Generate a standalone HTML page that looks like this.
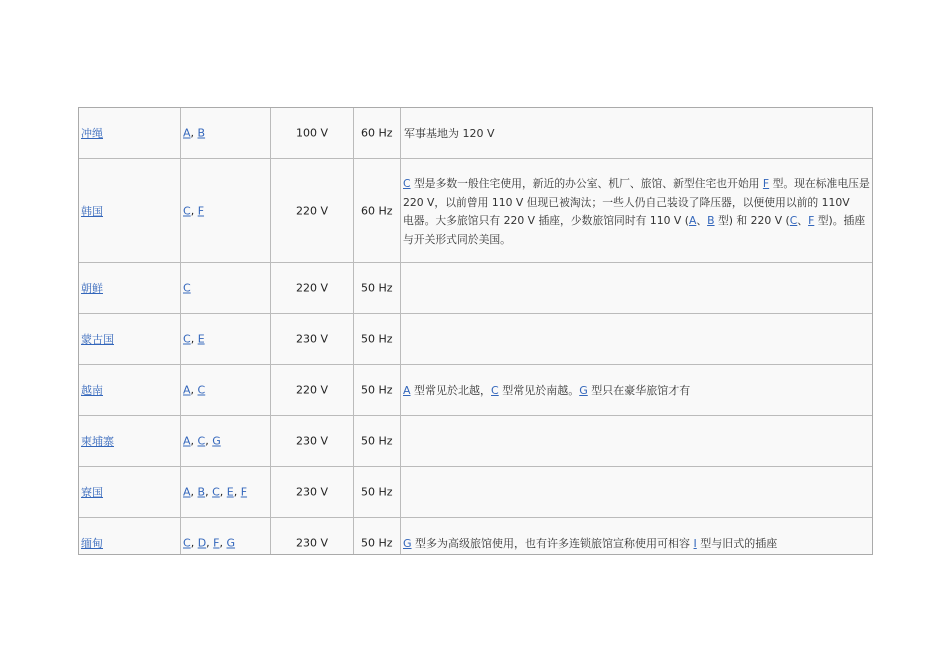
<!DOCTYPE html>
<html><head><meta charset="utf-8"><style>
body{margin:0;width:950px;height:672px;background:#fff;position:relative;overflow:hidden;font-family:"DejaVu Sans","Noto Sans CJK SC",sans-serif;font-size:11px;color:#222}
.t{position:absolute;left:78px;top:107px;width:793px;height:446px;background:#f9f9f9;border:1px solid #aaa;overflow:hidden}
.h{position:absolute;left:0;width:793px;height:1px;background:#bbb}
.v{position:absolute;top:0;width:1px;height:446px;background:#bbb}
.c{position:absolute;white-space:nowrap;transform:translateY(-50%)}
a{color:#3366bb;text-decoration:underline}
.n{font-family:"Noto Serif CJK SC",serif;font-size:11px}
.d{font-family:"DejaVu Sans","Noto Serif CJK SC",serif;font-size:11px;color:#333}
</style></head><body>
<div class="t">
<div class="h" style="top:50px"></div><div class="h" style="top:154px"></div><div class="h" style="top:205px"></div><div class="h" style="top:256px"></div><div class="h" style="top:307px"></div><div class="h" style="top:358px"></div><div class="h" style="top:409px"></div>
<div class="v" style="left:101px"></div><div class="v" style="left:191px"></div><div class="v" style="left:274px"></div><div class="v" style="left:321px"></div>
</div>
<div style="position:absolute;left:0;top:0">
<div class="c n" style="left:81px;top:133px"><a>冲绳</a></div><div class="c" style="left:183px;top:133px"><a>A</a>, <a>B</a></div><div class="c" style="left:296px;top:133px">100 V</div><div class="c" style="left:361px;top:133px">60 Hz</div><div class="c d" style="left:404px;top:133px">军事基地为 120 V</div>

<div class="c n" style="left:81px;top:211px"><a>韩国</a></div><div class="c" style="left:183px;top:211px"><a>C</a>, <a>F</a></div><div class="c" style="left:296px;top:211px">220 V</div><div class="c" style="left:361px;top:211px">60 Hz</div>
<div class="d" style="position:absolute;left:403px;top:175px;width:467px;line-height:18.5px;white-space:nowrap;font-size:10.8px"><a>C</a> 型是多数一般住宅使用，新近的办公室、机厂、旅馆、新型住宅也开始用 <a>F</a> 型。现在标准电压是<br>220 V，以前曾用 110 V 但现已被淘汰；一些人仍自己装设了降压器，以便使用以前的 110V<br>电器。大多旅馆只有 220 V 插座，少数旅馆同时有 110 V (<a>A</a>、<a>B</a> 型) 和 220 V (<a>C</a>、<a>F</a> 型)。插座<br>与开关形式同於美国。</div>

<div class="c n" style="left:81px;top:288px"><a>朝鲜</a></div><div class="c" style="left:183px;top:288px"><a>C</a></div><div class="c" style="left:296px;top:288px">220 V</div><div class="c" style="left:361px;top:288px">50 Hz</div>

<div class="c n" style="left:81px;top:339px"><a>蒙古国</a></div><div class="c" style="left:183px;top:339px"><a>C</a>, <a>E</a></div><div class="c" style="left:296px;top:339px">230 V</div><div class="c" style="left:361px;top:339px">50 Hz</div>

<div class="c n" style="left:81px;top:390px"><a>越南</a></div><div class="c" style="left:183px;top:390px"><a>A</a>, <a>C</a></div><div class="c" style="left:296px;top:390px">220 V</div><div class="c" style="left:361px;top:390px">50 Hz</div><div class="c d" style="left:403px;top:390px"><a>A</a> 型常见於北越，<a>C</a> 型常见於南越。<a>G</a> 型只在豪华旅馆才有</div>

<div class="c n" style="left:81px;top:441px"><a>柬埔寨</a></div><div class="c" style="left:183px;top:441px"><a>A</a>, <a>C</a>, <a>G</a></div><div class="c" style="left:296px;top:441px">230 V</div><div class="c" style="left:361px;top:441px">50 Hz</div>

<div class="c n" style="left:81px;top:492px"><a>寮国</a></div><div class="c" style="left:183px;top:492px"><a>A</a>, <a>B</a>, <a>C</a>, <a>E</a>, <a>F</a></div><div class="c" style="left:296px;top:492px">230 V</div><div class="c" style="left:361px;top:492px">50 Hz</div>

<div class="c n" style="left:81px;top:543px"><a>缅甸</a></div><div class="c" style="left:183px;top:543px"><a>C</a>, <a>D</a>, <a>F</a>, <a>G</a></div><div class="c" style="left:296px;top:543px">230 V</div><div class="c" style="left:361px;top:543px">50 Hz</div><div class="c d" style="left:403px;top:543px"><a>G</a> 型多为高级旅馆使用，也有许多连锁旅馆宣称使用可相容 <a>I</a> 型与旧式的插座</div>
</div>
</body></html>
